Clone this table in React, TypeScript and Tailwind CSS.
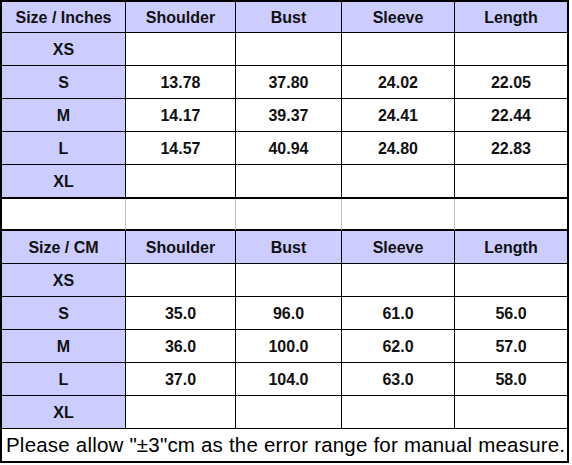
const inches = [
  { size: 'XS', v: ['', '', '', ''] },
  { size: 'S', v: ['13.78', '37.80', '24.02', '22.05'] },
  { size: 'M', v: ['14.17', '39.37', '24.41', '22.44'] },
  { size: 'L', v: ['14.57', '40.94', '24.80', '22.83'] },
  { size: 'XL', v: ['', '', '', ''] },
];

const cm = [
  { size: 'XS', v: ['', '', '', ''] },
  { size: 'S', v: ['35.0', '96.0', '61.0', '56.0'] },
  { size: 'M', v: ['36.0', '100.0', '62.0', '57.0'] },
  { size: 'L', v: ['37.0', '104.0', '63.0', '58.0'] },
  { size: 'XL', v: ['', '', '', ''] },
];

const cols = ['Shoulder', 'Bust', 'Sleeve', 'Length'];

const Block = ({ title, rows, first }: { title: string; rows: typeof inches; first?: boolean }) => (
  <>
    <div
      className={`${first ? 'h-[31px]' : 'h-[33px]'} pt-[2px] flex items-center justify-center bg-[#ccccff] border-r border-b border-black`}
    >
      {title}
    </div>
    {cols.map((c, i) => (
      <div
        key={c}
        className={`${first ? 'h-[31px]' : 'h-[33px]'} pt-[2px] flex items-center justify-center bg-[#ccccff] border-b border-black ${i < 3 ? 'border-r' : ''}`}
      >
        {c}
      </div>
    ))}
    {rows.map((r, ri) => {
      const thick = first && ri === rows.length - 1;
      return (
        <div key={r.size} className="contents">
          <div
            className={`pt-[2px] flex items-center justify-center bg-[#ccccff] border-r border-black ${thick ? 'h-[34px] border-b-2' : 'h-[33px] border-b'}`}
          >
            {r.size}
          </div>
          {r.v.map((x, i) => (
            <div
              key={i}
              className={`pt-[2px] flex items-center justify-center bg-white border-black ${thick ? 'h-[34px] border-b-2' : 'h-[33px] border-b'} ${i < 3 ? 'border-r' : ''}`}
            >
              {x}
            </div>
          ))}
        </div>
      );
    })}
  </>
);

export default function App() {
  return (
    <div className="w-[572px] h-[465px] bg-white">
      <div
        className="w-[569px] border-2 border-black grid grid-cols-[124px_110px_106px_113px_112px] text-[16px] font-bold text-[#111]"
        style={{ fontFamily: '"Liberation Sans", Arial, sans-serif' }}
      >
        <Block title="Size / Inches" rows={inches} first />
        {[0, 1, 2, 3, 4].map((i) => (
          <div
            key={i}
            className={`h-[32px] bg-white border-b-2 border-b-black ${i < 4 ? 'border-r border-r-[#c0c0c0]' : ''}`}
          />
        ))}
        <Block title="Size / CM" rows={cm} />
        <div className="col-span-5 h-[32px] flex items-center pl-[4px] bg-white font-normal text-[20.5px] tracking-[0.2px] text-black">
          Please allow "±3"cm as the error range for manual measure.
        </div>
      </div>
    </div>
  );
}
